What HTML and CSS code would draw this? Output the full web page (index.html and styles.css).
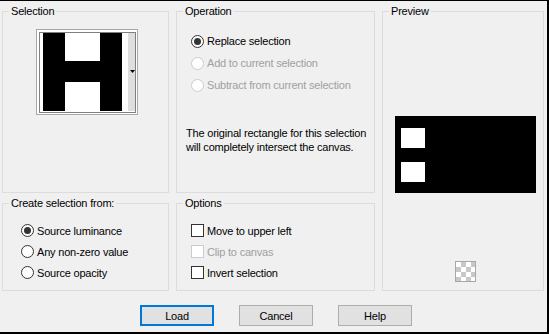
FILE: index.html
```html
<html>
    <head>
        <link rel="stylesheet" href="styles.css">
    </head>
    <body>
        <div class="dialog">
            <div class="groups">
                <fieldset class="group sel">
                    <legend>Selection</legend>
                    <div class="thumb">
                        <svg width="100" height="84" viewBox="0 0 100 84">
                            <rect x="0" y="0" width="100" height="84" fill="#fff"/>
                            <rect x="6" y="3" width="22" height="78" fill="#000"/>
                            <rect x="63" y="3" width="22" height="78" fill="#000"/>
                            <rect x="28" y="31" width="35" height="21" fill="#000"/>
                            <rect x="91" y="3" width="7" height="78" fill="#dedede"/>
                            <rect x="2.5" y="2.5" width="96" height="80" fill="none" stroke="#000" stroke-dasharray="1 1"/>
                            <polygon points="93,40 98,40 95.5,43" fill="#000"/>
                        </svg>
                    </div>
                </fieldset>
                <fieldset class="group op">
                    <legend>Operation</legend>
                    <div class="op-body">
                        <div class="row"><span class="radio on"></span>Replace selection</div>
                        <div class="row off"><span class="radio"></span>Add to current selection</div>
                        <div class="row off"><span class="radio"></span>Subtract from current selection</div>
                        <p class="note">The original rectangle for this selection<br>will completely intersect the canvas.</p>
                    </div>
                </fieldset>
                <fieldset class="group preview">
                    <legend>Preview</legend>
                    <div class="pv-body">
                        <svg width="141" height="77" viewBox="0 0 141 77">
                            <rect x="0" y="0" width="141" height="77" fill="#000"/>
                            <rect x="6" y="12" width="24" height="20" fill="#fff"/>
                            <rect x="6" y="46" width="24" height="20" fill="#fff"/>
                        </svg>
                        <div class="checker"></div>
                    </div>
                </fieldset>
                <fieldset class="group source">
                    <legend>Create selection from:</legend>
                    <div class="src-body">
                        <div class="row small"><span class="radio on"></span>Source luminance</div>
                        <div class="row small"><span class="radio"></span>Any non-zero value</div>
                        <div class="row small"><span class="radio"></span>Source opacity</div>
                    </div>
                </fieldset>
                <fieldset class="group options">
                    <legend>Options</legend>
                    <div class="opt-body">
                        <div class="row small"><span class="check"></span>Move to upper left</div>
                        <div class="row small off"><span class="check"></span>Clip to canvas</div>
                        <div class="row small"><span class="check"></span>Invert selection</div>
                    </div>
                </fieldset>
            </div>
            <div class="buttons">
                <button class="btn default">Load</button>
                <button class="btn">Cancel</button>
                <button class="btn">Help</button>
            </div>
        </div>
    </body>
</html>
```

FILE: styles.css
```css
*{
    box-sizing: border-box;
}
body{
    margin: 0;
    font-family: "Liberation Sans", Arial, sans-serif;
    font-size: 11px;
    letter-spacing: -0.2px;
    color: #000;
}
.dialog{
    width: 549px;
    height: 334px;
    background: #f0f0f0;
    border-top: 1px solid #000;
    border-right: 2px solid #000;
    border-bottom: 2px solid #000;
    padding: 4px 0 0 2px;
}
.groups{
    display: grid;
    grid-template-columns: 167px 199px 162px;
    grid-template-rows: 188px 94px;
    column-gap: 7px;
    row-gap: 4px;
}
.group{
    margin: 0;
    padding: 0;
    min-width: 0;
    border: 1px solid #dcdcdc;
}
legend{
    margin-left: 6px;
    padding: 0 2px;
    line-height: 12px;
}
.sel{
    grid-column: 1;
    grid-row: 1;
}
.op{
    grid-column: 2;
    grid-row: 1;
}
.preview{
    grid-column: 3;
    grid-row: 1 / 3;
}
.source{
    grid-column: 1;
    grid-row: 2;
}
.options{
    grid-column: 2;
    grid-row: 2;
}
.thumb{
    margin: 12px 0 0 33px;
    width: 102px;
    height: 86px;
    border: 1px solid #a8a8a8;
    background: #fff;
}
.thumb svg, .pv-body svg{
    display: block;
}
.op-body{
    padding: 13px 0 0 9px;
}
.row{
    height: 22px;
    display: flex;
    align-items: center;
    gap: 3px;
}
.op-body .row{
    margin-left: 5px;
}
.row.small{
    height: 21px;
}
.radio{
    flex: none;
    width: 13px;
    height: 13px;
    border: 1px solid #333;
    border-radius: 50%;
    background: #fff;
    display: flex;
    align-items: center;
    justify-content: center;
}
.radio.on::after{
    content: "";
    width: 7px;
    height: 7px;
    border-radius: 50%;
    background: #333;
}
.check{
    flex: none;
    width: 13px;
    height: 13px;
    border: 1px solid #333;
    background: #fff;
}
.off{
    color: #a0a0a0;
}
.off .radio, .off .check{
    border-color: #cccccc;
}
.note{
    margin: 30px 0 0;
    line-height: 14px;
}
.src-body{
    padding: 11px 0 0 18px;
}
.opt-body{
    padding: 11px 0 0 14px;
}
.pv-body{
    padding: 99px 7px 0 12px;
    display: flex;
    flex-direction: column;
    align-items: center;
}
.checker{
    margin-top: 68px;
    width: 21px;
    height: 21px;
    border: 1px solid #a8a8a8;
    background-color: #fff;
    background-image: conic-gradient(#c8c8c8 25%, #fff 0 50%, #c8c8c8 0 75%, #fff 0);
    background-size: 10px 10px;
    background-position: 0 0;
}
.buttons{
    display: flex;
    justify-content: center;
    gap: 25px;
    margin-top: 14px;
    padding-left: 3px;
}
.btn{
    width: 74px;
    height: 21px;
    padding: 0;
    border: 1px solid #adadad;
    background: #e1e1e1;
    font: inherit;
    letter-spacing: inherit;
    color: #000;
}
.btn.default{
    border: 2px solid #0078d7;
}
```
